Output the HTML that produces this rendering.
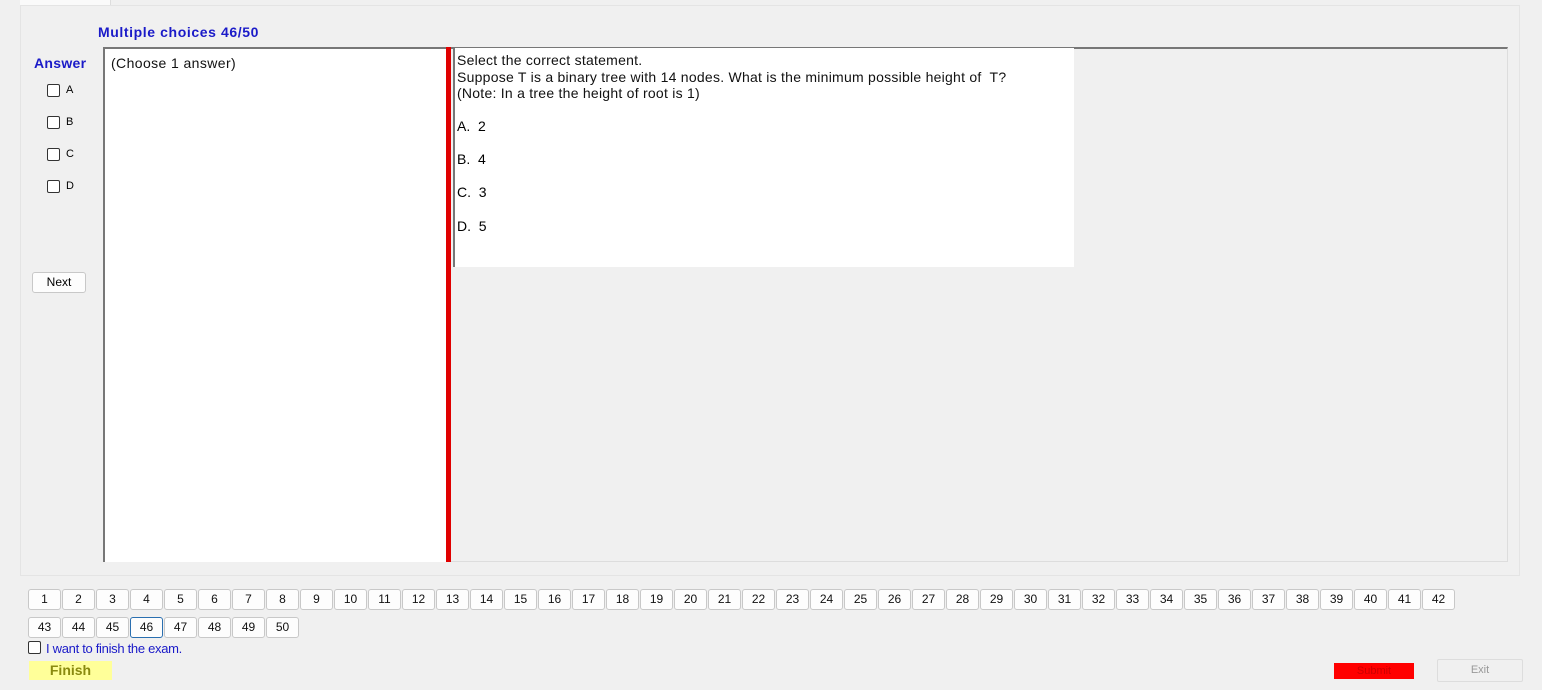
<!DOCTYPE html>
<html><head><style>
body{margin:0;width:1542px;height:690px;background:#f0f0f0;font-family:"Liberation Sans",Arial,sans-serif;position:relative;overflow:hidden}
.a{position:absolute}
.cb{position:absolute;width:11px;height:11px;border:1px solid #333;border-radius:2px;background:#fff}
.nb{position:absolute;width:31px;height:19px;border:1px solid #c8c8c8;border-radius:3px;background:#fdfdfd;font-size:12px;text-align:center;line-height:19px;color:#111}
</style></head><body>
<div class="a" style="left:20px;top:0;width:90px;height:5px;background:#fafafa;border-right:1px solid #ddd"></div>
<div class="a" style="left:20px;top:5px;width:1500px;height:571px;border:1px solid #e4e4e4;box-sizing:border-box"></div>
<div class="a" style="left:98px;top:24px;font-size:14px;font-weight:bold;color:#1a1ac8;letter-spacing:0.6px">Multiple choices 46/50</div>
<div class="a" style="left:34px;top:55px;font-size:14px;font-weight:bold;color:#1a1ac8;letter-spacing:0.3px">Answer</div>
<div class="cb" style="left:47px;top:84px"></div><div class="a" style="left:66px;top:84px;font-size:11px">A</div>
<div class="cb" style="left:47px;top:116px"></div><div class="a" style="left:66px;top:116px;font-size:11px">B</div>
<div class="cb" style="left:47px;top:148px"></div><div class="a" style="left:66px;top:148px;font-size:11px">C</div>
<div class="cb" style="left:47px;top:180px"></div><div class="a" style="left:66px;top:180px;font-size:11px">D</div>
<div class="a" style="left:32px;top:272px;width:52px;height:19px;border:1px solid #c8c8c8;border-radius:3px;background:#fdfdfd;font-size:12px;text-align:center;line-height:19px">Next</div>
<div class="a" style="left:103px;top:47px;width:1405px;height:515px;border-top:2px solid #777;border-right:1px solid #ddd;border-bottom:1px solid #ddd;box-sizing:border-box"></div>
<div class="a" style="left:103px;top:47px;width:343px;height:515px;background:#fff;border-left:2px solid #777;border-top:2px solid #777;box-sizing:border-box"></div>
<div class="a" style="left:111px;top:55px;font-size:14px;color:#111;letter-spacing:0.4px">(Choose 1 answer)</div>
<div class="a" style="left:446px;top:47px;width:5px;height:515px;background:#e00000"></div>
<div class="a" style="left:453px;top:48px;width:621px;height:219px;background:#fff;border-left:2px solid #777;box-sizing:border-box"></div>
<div class="a" style="left:457px;top:52px;font-size:14px;line-height:16.5px;color:#111;letter-spacing:0.25px">Select the correct statement.<br>Suppose T is a binary tree with 14 nodes. What is the minimum possible height of&nbsp; T?<br>(Note: In a tree the height of root is 1)</div>
<div class="a" style="left:457px;top:118px;font-size:14px">A.&nbsp; 2</div>
<div class="a" style="left:457px;top:151px;font-size:14px">B.&nbsp; 4</div>
<div class="a" style="left:457px;top:184px;font-size:14px">C.&nbsp; 3</div>
<div class="a" style="left:457px;top:218px;font-size:14px">D.&nbsp; 5</div>
<div id="nums"></div>
<div class="cb" style="left:28px;top:641px"></div>
<div class="a" style="left:46px;top:641px;font-size:13px;color:#1a1ac8;letter-spacing:-0.3px">I want to finish the exam.</div>
<div class="a" style="left:29px;top:661px;width:83px;height:19px;background:#ffff99;font-size:14px;font-weight:bold;color:#8a8a10;text-align:center;line-height:19px">Finish</div>
<div class="a" style="left:1334px;top:663px;width:80px;height:16px;background:#ff0000;font-size:11px;color:#c00;text-align:center;line-height:16px">Submit</div>
<div class="a" style="left:1437px;top:659px;width:84px;height:21px;border:1px solid #ddd;border-radius:2px;font-size:11px;color:#999;text-align:center;line-height:21px">Exit</div>
<script>
var h='';for(var i=1;i<=50;i++){var r=i<=42?0:1,c=r?i-43:i-1;var x=28+c*34,y=r?617:589;h+='<div class="nb" style="left:'+x+'px;top:'+y+'px'+(i==46?';border-color:#2a6fb0':'')+'">'+i+'</div>';}
document.getElementById('nums').innerHTML=h;
</script>
</body></html>
